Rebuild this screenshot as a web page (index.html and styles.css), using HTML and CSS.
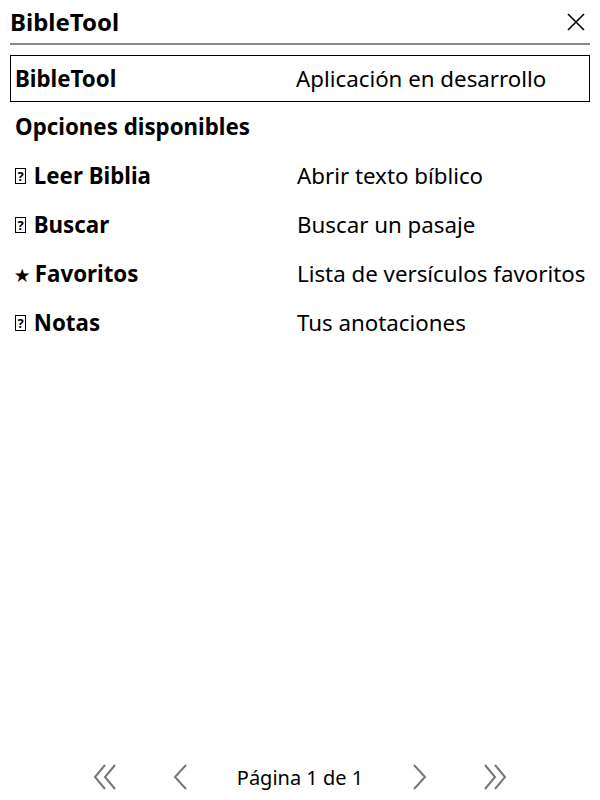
FILE: index.html
```html
<!DOCTYPE html>
<html lang="es">
<head>
<meta charset="utf-8">
<title>BibleTool</title>
<link rel="stylesheet" href="styles.css">
</head>
<body>
<div class="page">
  <header class="titlebar">
    <div class="title">BibleTool</div>
    <svg class="close" width="20" height="20" viewBox="0 0 20 20"><path d="M2 2 L18 18 M18 2 L2 18" stroke="#000" stroke-width="1.6" fill="none"/></svg>
  </header>
  <div class="rule"></div>
  <main class="list">
    <div class="row boxed">
      <div class="key">BibleTool</div>
      <div class="val">Aplicación en desarrollo</div>
    </div>
    <div class="row">
      <div class="key">Opciones disponibles</div>
    </div>
    <div class="row">
      <div class="key"><span class="tofu">?</span> Leer Biblia</div>
      <div class="val">Abrir texto bíblico</div>
    </div>
    <div class="row">
      <div class="key"><span class="tofu">?</span> Buscar</div>
      <div class="val">Buscar un pasaje</div>
    </div>
    <div class="row">
      <div class="key"><span class="star">★</span> Favoritos</div>
      <div class="val">Lista de versículos favoritos</div>
    </div>
    <div class="row">
      <div class="key"><span class="tofu">?</span> Notas</div>
      <div class="val">Tus anotaciones</div>
    </div>
  </main>
  <footer class="pager">
    <svg class="nav first" width="26" height="28" viewBox="0 0 26 28"><path d="M13 2 L3 14 L13 26 M23 2 L13 14 L23 26" stroke="#777" stroke-width="2" fill="none"/></svg>
    <svg class="nav prev" width="18" height="28" viewBox="0 0 18 28"><path d="M15 2 L4 14 L15 26" stroke="#777" stroke-width="2" fill="none"/></svg>
    <div class="pageinfo">Página 1 de 1</div>
    <svg class="nav next" width="18" height="28" viewBox="0 0 18 28"><path d="M3 2 L14 14 L3 26" stroke="#777" stroke-width="2" fill="none"/></svg>
    <svg class="nav last" width="26" height="28" viewBox="0 0 26 28"><path d="M3 2 L13 14 L3 26 M13 2 L23 14 L13 26" stroke="#777" stroke-width="2" fill="none"/></svg>
  </footer>
</div>
</body>
</html>
```
FILE: styles.css
```css
html, body {
  margin: 0;
  padding: 0;
  background: #fff;
}
body {
  font-family: "Noto Sans", "Open Sans", sans-serif;
  color: #000;
}
.page {
  width: 600px;
  height: 800px;
  display: flex;
  flex-direction: column;
}
.titlebar {
  height: 43px;
  display: flex;
  align-items: center;
  justify-content: space-between;
  padding: 0 14px 0 10px;
}
.title {
  font-weight: bold;
  font-size: 24px;
  margin-top: -1px;
}
.close {
  display: block;
  margin-top: 1px;
}
.rule {
  height: 2px;
  margin: 0 10px;
  background: #888;
}
.list {
  margin-top: 10px;
  padding: 0 10px;
  display: flex;
  flex-direction: column;
}
.row {
  height: 49px;
  display: grid;
  grid-template-columns: 282px 1fr;
  align-items: center;
  padding-left: 5px;
  font-size: 22.3px;
  box-sizing: border-box;
}
.row.boxed {
  height: 47px;
  border: 1px solid #000;
  padding-left: 4px;
}
.row.boxed .val {
  margin-left: -1px;
}
.key {
  font-weight: bold;
  white-space: nowrap;
}
.val {
  white-space: nowrap;
}
.tofu {
  display: inline-block;
  width: 11px;
  height: 16px;
  border: 1.5px solid #000;
  font-size: 13px;
  line-height: 14px;
  text-align: center;
  font-weight: bold;
  vertical-align: 3px;
  box-sizing: border-box;
  margin-right: 2px;
}
.star {
  font-size: 16px;
  vertical-align: 1px;
}
.pager {
  margin-top: auto;
  height: 46px;
  display: flex;
  align-items: center;
  justify-content: center;
}
.pager .first { margin-right: 53px; }
.pager .prev { margin-right: 48px; }
.pager .next { margin-left: 48px; }
.pager .last { margin-left: 53px; }
.pageinfo {
  font-size: 20px;
}
```
